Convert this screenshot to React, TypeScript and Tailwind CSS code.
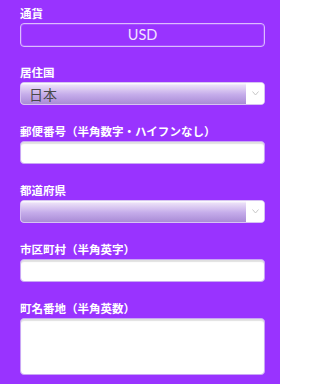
import React from "react";

const font = "font-['Noto_Sans_CJK_JP','Noto_Sans',sans-serif]";

function Label({ children }: { children: React.ReactNode }) {
  return (
    <div className="h-[14px] text-[11.5px] leading-[14px] font-bold text-white whitespace-nowrap">
      {children}
    </div>
  );
}

function TextInput({ h = "h-[23px]" }: { h?: string }) {
  return (
    <div
      className={`mt-[3px] ${h} w-full rounded-[4px] bg-white border border-[#c9a6f5] shadow-[inset_0_2px_1px_rgba(0,0,0,0.12)]`}
    />
  );
}

function Select({ value }: { value?: string }) {
  return (
    <div className="mt-[3px] flex h-[23px] w-full overflow-hidden rounded-[4px] border border-[#d6c2f2] bg-white">
      <div className="flex flex-1 items-center bg-[linear-gradient(to_bottom,#ffffff_0%,#e9ddf7_12%,#c5acea_55%,#a98bd6_100%)] pl-[8px] text-[14px] leading-none text-[#4a4a4a]">
        {value}
      </div>
      <div className="flex w-[18px] items-center justify-center bg-white">
        <svg width="7" height="5" viewBox="0 0 7 5" fill="none">
          <path d="M0.5 0.5L3.5 4L6.5 0.5" stroke="#c8c8c8" strokeWidth="1" />
        </svg>
      </div>
    </div>
  );
}

export default function App() {
  return (
    <div className={`${font} w-[280px] h-[384px] bg-[#9933ff] pl-[20px] pr-[15px] pt-[6px]`}>
      <div className="h-[59px]">
        <Label>通貨</Label>
        <div className="mt-[3px] flex h-[24px] w-full items-center justify-center rounded-[4px] border border-[#dcbcff] shadow-[inset_0_0_0_1px_rgba(255,255,255,0.15)] text-[14.5px] leading-none text-[#f1e4ff] font-['Lato','Noto_Sans',sans-serif]">
          USD
        </div>
      </div>
      <div className="h-[59px]">
        <Label>居住国</Label>
        <Select value="日本" />
      </div>
      <div className="h-[59px]">
        <Label>郵便番号（半角数字・ハイフンなし）</Label>
        <TextInput />
      </div>
      <div className="h-[59px]">
        <Label>都道府県</Label>
        <Select />
      </div>
      <div className="h-[59px]">
        <Label>市区町村（半角英字）</Label>
        <TextInput />
      </div>
      <div>
        <Label>町名番地（半角英数）</Label>
        <TextInput h="h-[57px]" />
      </div>
    </div>
  );
}
